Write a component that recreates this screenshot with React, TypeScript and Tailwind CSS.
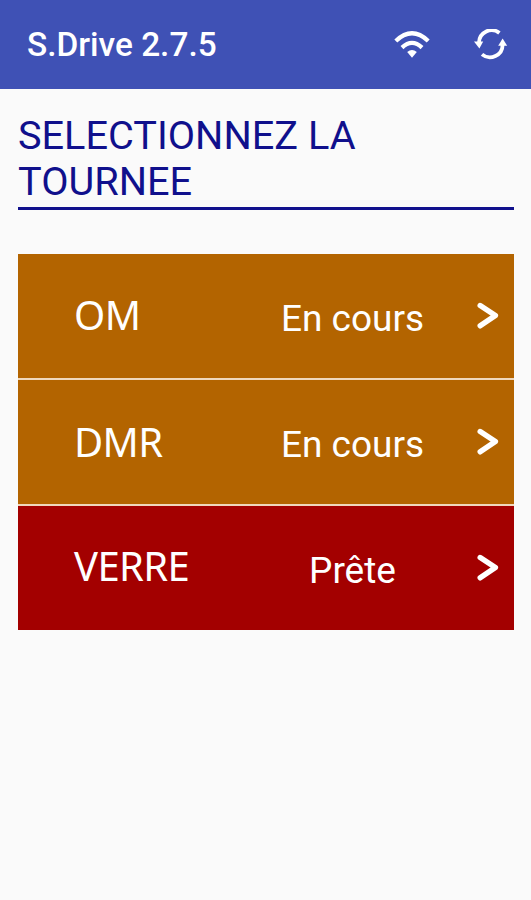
import { clsx } from "clsx";

const rounds = [
  { name: "OM", status: "En cours", color: "bg-[#b36400]", nameClass: "pb-[3px]" },
  { name: "DMR", status: "En cours", color: "bg-[#b36400]", nameClass: "pb-0" },
  { name: "VERRE", status: "Prête", color: "bg-[#a30000]", nameClass: "pb-[4px]" },
];

function WifiIcon() {
  return (
    <svg width="38" height="30" viewBox="0 0 38 30" fill="none" stroke="white" strokeWidth="4.2">
      <path d="M1.8 11 Q18 -4.4 34.2 11" />
      <path d="M8 17.6 Q18 8.2 28 17.6" />
      <path d="M13.2 22 Q18 18 22.8 22 L18 27.8 Z" fill="white" stroke="none" />
    </svg>
  );
}

function SyncIcon() {
  return (
    <svg width="34" height="32" viewBox="0 0 34 32" fill="none" stroke="white" strokeWidth="3.8">
      <path d="M25.4 4 A12.6 12.6 0 0 0 5 13.6" />
      <path d="M0 12.4 L9.2 12.4 L5.4 19.5 Z" fill="white" stroke="none" />
      <path d="M8 25.4 A12.6 12.6 0 0 0 28.6 15.6" />
      <path d="M24.2 16.8 L33.2 16.8 L28.6 9.4 Z" fill="white" stroke="none" />
    </svg>
  );
}

function Chevron() {
  return (
    <svg width="24" height="30" viewBox="0 0 24 30" fill="none" stroke="white" strokeWidth="5.4">
      <path d="M4.2 4.6 L19.4 14.6 L4.2 24.8" strokeLinecap="round" strokeLinejoin="round" />
    </svg>
  );
}

export default function App() {
  return (
    <div className="h-[900px] w-[531px] overflow-hidden bg-[#fafafa] font-['Roboto',sans-serif]">
      <header className="flex h-[89px] items-center bg-[#3f51b5] pl-[27px] pr-[23px] text-white">
        <h1 className="flex-1 whitespace-nowrap text-[33.4px] font-medium leading-none">S.Drive 2.7.5</h1>
        <div className="flex items-center gap-[42px]">
          <WifiIcon />
          <SyncIcon />
        </div>
      </header>

      <main className="pl-[18px] pr-[17px] pt-[24px]">
        <h2 className="h-[97px] border-b-[3px] border-[#10108c] text-[39.7px] leading-[46px] text-[#10108c]">
          SELECTIONNEZ LA
          <br />
          TOURNEE
        </h2>

        <ul className="mt-[44px] flex flex-col gap-[2px] bg-[#f0d8bc]">
          {rounds.map(({ name, status, color, nameClass }) => (
            <li key={name} className={clsx("flex h-[124px] items-center text-white", color)}>
              <span
                className={clsx(
                  "w-[211px] pl-[56px] font-['Noto_Sans',sans-serif] text-[40px] leading-none tracking-[-0.6px]",
                  nameClass,
                )}
              >
                {name}
              </span>
              <span className="w-[247px] pt-[5px] text-center text-[37px] leading-none">{status}</span>
              <Chevron />
            </li>
          ))}
        </ul>
      </main>
    </div>
  );
}
